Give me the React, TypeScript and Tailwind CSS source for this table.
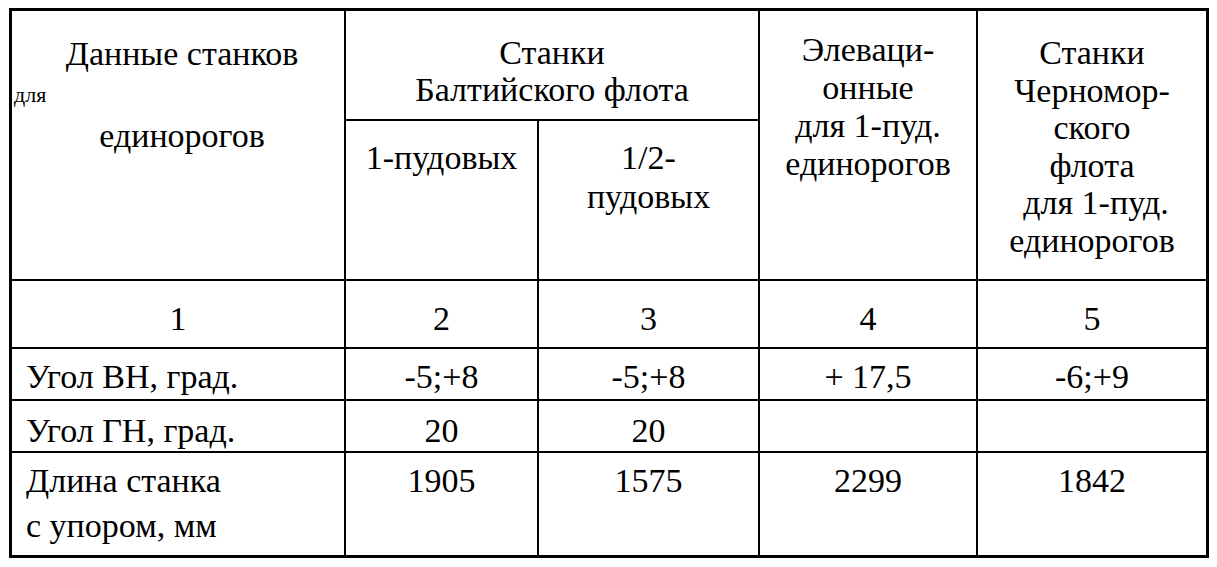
const rows = [
  { label: ["Угол ВН, град."], values: ["-5;+8", "-5;+8", "+ 17,5", "-6;+9"], pad: "pt-[9px] leading-[37px]" },
  { label: ["Угол ГН, град."], values: ["20", "20", "", ""], pad: "pt-[11px] leading-[37px]" },
  { label: ["Длина станка", "с упором, мм"], values: ["1905", "1575", "2299", "1842"], pad: "pt-[5px] leading-[45px]" },
];

const serif = "font-['Liberation_Serif']";

const App = () => {
  return (
    <div className="min-h-[567px] w-[1217px] bg-white pl-[9px] pt-[8px] text-black text-[34px]">
      <div className="grid w-fit grid-cols-[334px_193px_221px_218px_228px] grid-rows-[110px_160px_68px_52px_52px_102px] border-[3px] border-black">
        {/* header */}
        <div className={`${serif} row-span-2 border-r-2 border-b-2 border-black pt-[22px]`}>
          <div className="h-[41px] leading-[41px] text-center pl-[8px]">Данные станков</div>
          <div className="h-[41px] leading-[41px] text-[22px] pl-[2px]">для</div>
          <div className="h-[41px] leading-[41px] text-center pl-[8px]">единорогов</div>
        </div>
        <div className={`${serif} col-span-2 border-r-2 border-b-2 border-black pt-[23px] text-center leading-[37px]`}>
          <div>Станки</div>
          <div>Балтийского флота</div>
        </div>
        <div className={`${serif} row-span-2 border-r-2 border-b-2 border-black pt-[20px] text-center leading-[38px]`}>
          <div>Элеваци-</div>
          <div>онные</div>
          <div>для 1-пуд.</div>
          <div>единорогов</div>
        </div>
        <div className={`${serif} row-span-2 border-b-2 border-black pt-[23px] text-center leading-[37.5px]`}>
          <div>Станки</div>
          <div>Черномор-</div>
          <div>ского</div>
          <div>флота</div>
          <div className="pl-[8px]">для 1-пуд.</div>
          <div>единорогов</div>
        </div>
        <div className={`${serif} border-r-2 border-b-2 border-black pt-[17px] text-center leading-[39px]`}>1-пудовых</div>
        <div className={`${serif} border-r-2 border-b-2 border-black pt-[17px] text-center leading-[39px]`}>
          <div>1/2-</div>
          <div>пудовых</div>
        </div>

        {/* column numbers */}
        {["1", "2", "3", "4"].map((n) => (
          <div key={n} className={`${serif} border-r-2 border-b-2 border-black pt-[19px] text-center leading-[37px]`}>
            {n}
          </div>
        ))}
        <div className={`${serif} border-b-2 border-black pt-[19px] text-center leading-[37px]`}>5</div>

        {/* data */}
        {rows.map((r, i) => {
          const last = i === rows.length - 1;
          return [
            <div key={`l${i}`} className={`${serif} ${r.pad} pl-[14px] border-r-2 border-black ${last ? "" : "border-b-2"}`}>
              {r.label.map((l) => (
                <div key={l}>{l}</div>
              ))}
            </div>,
            ...r.values.map((v, j) => (
              <div
                key={`v${i}${j}`}
                className={`${serif} ${r.pad} text-center border-black ${j < 3 ? "border-r-2" : ""} ${last ? "" : "border-b-2"}`}
              >
                {v}
              </div>
            )),
          ];
        })}
      </div>
    </div>
  );
};

export default App;
